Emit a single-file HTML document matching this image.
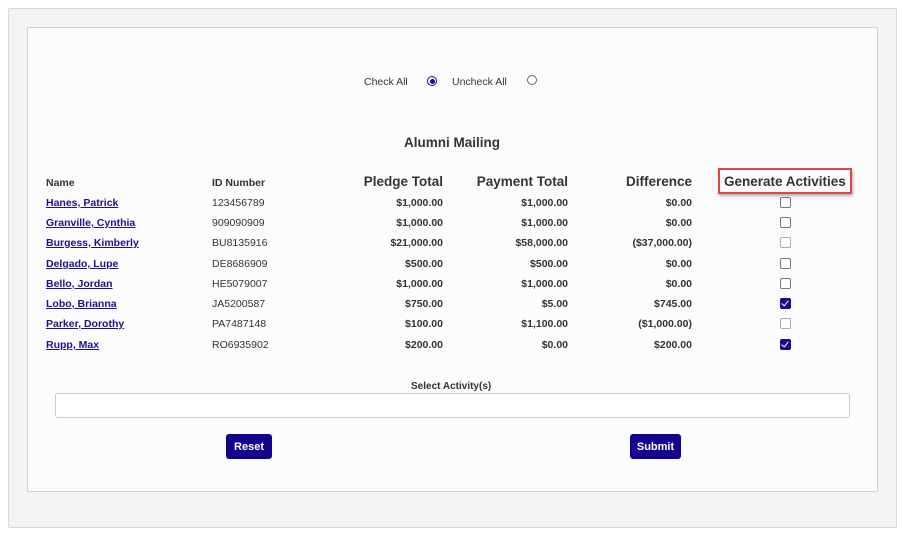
<!DOCTYPE html>
<html><head><style>
body{margin:0;width:902px;height:534px;background:#fff;font-family:"Liberation Sans",Arial,sans-serif;position:relative;overflow:hidden;color:#333}
.a{position:absolute;white-space:nowrap}
#outer{position:absolute;left:8px;top:8px;width:887px;height:518px;background:#f4f4f4;border:1px solid #d8d8d8;border-radius:2px}
#inner{position:absolute;left:27px;top:27px;width:849px;height:463px;background:#fcfcfc;border:1px solid #d0d0d0}
.s{font-size:10.5px;font-weight:bold}
.h{font-size:13.5px;font-weight:bold}
.r{text-align:right;width:120px}
a{text-decoration:underline;color:#1c1289}
.cb{position:absolute;left:780px;width:9px;height:9px;border:1px solid #777;border-radius:2px;background:#fff}
.cb.on{background:#1a0a8c;border-color:#1a0a8c}
.cb.on::after{content:"";position:absolute;left:2px;top:0px;width:3px;height:6px;border:solid #fff;border-width:0 1.5px 1.5px 0;transform:rotate(40deg)}
.btn{position:absolute;background:#14038f;color:#fff;font-size:11px;font-weight:bold;border-radius:3px;text-align:center;line-height:27px;height:25px}
.radio{position:absolute;width:8px;height:8px;border:1px solid #666;border-radius:50%;background:#fff}
</style></head><body>
<div id="outer"></div><div id="inner"></div>
<div class="a s" style="left:364px;top:76px;font-weight:normal;color:#333">Check All</div>
<div class="radio" style="left:427px;top:76px;border-color:#1a0a8c"><div style="position:absolute;left:1.5px;top:1.5px;width:5px;height:5px;border-radius:50%;background:#1a0a8c"></div></div>
<div class="a s" style="left:452px;top:76px;font-weight:normal">Uncheck All</div>
<div class="radio" style="left:527px;top:75px"></div>
<div class="a h" style="left:404px;top:135px">Alumni Mailing</div>
<div class="a s" style="left:46px;top:177px">Name</div>
<div class="a s" style="left:212px;top:177px">ID Number</div>
<div class="a h r" style="left:323px;top:174px">Pledge Total</div>
<div class="a h r" style="left:448px;top:174px">Payment Total</div>
<div class="a h r" style="left:572px;top:174px">Difference</div>
<div class="a" style="left:718px;top:168px;width:134px;height:26px;border:2px solid #e0454a;box-sizing:border-box;box-shadow:1px 2px 3px rgba(0,0,0,.3);background:#fcfcfc"></div>
<div class="a h" style="left:724px;top:174px">Generate Activities</div>

<div class="a s" style="left:46px;top:197px"><a>Hanes, Patrick</a></div><div class="a s" style="left:212px;top:197px;font-weight:normal">123456789</div><div class="a s r" style="left:323px;top:197px">$1,000.00</div><div class="a s r" style="left:448px;top:197px">$1,000.00</div><div class="a s r" style="left:572px;top:197px">$0.00</div><div class="cb" style="top:197px"></div>
<div class="a s" style="left:46px;top:217px"><a>Granville, Cynthia</a></div><div class="a s" style="left:212px;top:217px;font-weight:normal">909090909</div><div class="a s r" style="left:323px;top:217px">$1,000.00</div><div class="a s r" style="left:448px;top:217px">$1,000.00</div><div class="a s r" style="left:572px;top:217px">$0.00</div><div class="cb" style="top:217px"></div>
<div class="a s" style="left:46px;top:237px"><a>Burgess, Kimberly</a></div><div class="a s" style="left:212px;top:237px;font-weight:normal">BU8135916</div><div class="a s r" style="left:323px;top:237px">$21,000.00</div><div class="a s r" style="left:448px;top:237px">$58,000.00</div><div class="a s r" style="left:572px;top:237px">($37,000.00)</div><div class="cb" style="top:237px;border-color:#aaa"></div>
<div class="a s" style="left:46px;top:258px"><a>Delgado, Lupe</a></div><div class="a s" style="left:212px;top:258px;font-weight:normal">DE8686909</div><div class="a s r" style="left:323px;top:258px">$500.00</div><div class="a s r" style="left:448px;top:258px">$500.00</div><div class="a s r" style="left:572px;top:258px">$0.00</div><div class="cb" style="top:258px"></div>
<div class="a s" style="left:46px;top:278px"><a>Bello, Jordan</a></div><div class="a s" style="left:212px;top:278px;font-weight:normal">HE5079007</div><div class="a s r" style="left:323px;top:278px">$1,000.00</div><div class="a s r" style="left:448px;top:278px">$1,000.00</div><div class="a s r" style="left:572px;top:278px">$0.00</div><div class="cb" style="top:278px"></div>
<div class="a s" style="left:46px;top:298px"><a>Lobo, Brianna</a></div><div class="a s" style="left:212px;top:298px;font-weight:normal">JA5200587</div><div class="a s r" style="left:323px;top:298px">$750.00</div><div class="a s r" style="left:448px;top:298px">$5.00</div><div class="a s r" style="left:572px;top:298px">$745.00</div><div class="cb on" style="top:298px"></div>
<div class="a s" style="left:46px;top:318px"><a>Parker, Dorothy</a></div><div class="a s" style="left:212px;top:318px;font-weight:normal">PA7487148</div><div class="a s r" style="left:323px;top:318px">$100.00</div><div class="a s r" style="left:448px;top:318px">$1,100.00</div><div class="a s r" style="left:572px;top:318px">($1,000.00)</div><div class="cb" style="top:318px;border-color:#aaa"></div>
<div class="a s" style="left:46px;top:339px"><a>Rupp, Max</a></div><div class="a s" style="left:212px;top:339px;font-weight:normal">RO6935902</div><div class="a s r" style="left:323px;top:339px">$200.00</div><div class="a s r" style="left:448px;top:339px">$0.00</div><div class="a s r" style="left:572px;top:339px">$200.00</div><div class="cb on" style="top:339px"></div>

<div class="a" style="left:411px;top:381px;font-size:10px;font-weight:bold;color:#333">Select Activity(s)</div>
<div class="a" style="left:55px;top:393px;width:793px;height:23px;border:1px solid #ccc;border-radius:3px;background:#fff"></div>
<div class="btn" style="left:226px;top:434px;width:46px">Reset</div>
<div class="btn" style="left:630px;top:434px;width:51px">Submit</div>
</body></html>
